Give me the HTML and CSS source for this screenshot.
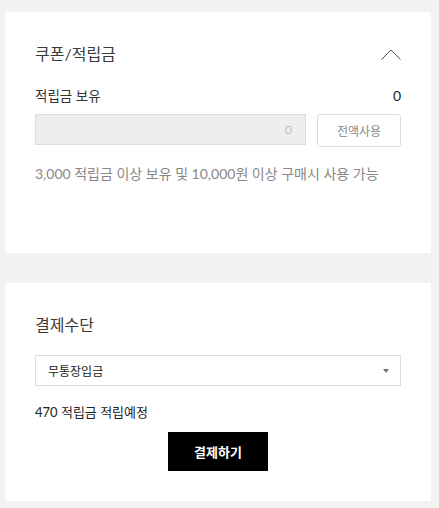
FILE: index.html
```html
<!DOCTYPE html>
<html lang="ko">
<head>
<meta charset="utf-8">
<title>주문서</title>
<link rel="stylesheet" href="styles.css">
</head>
<body>
<div class="page">
  <section class="card card-coupon">
    <div class="card-head">
      <h2 class="card-title">쿠폰/적립금</h2>
      <svg class="chevron" width="20" height="11" viewBox="0 0 20 11" aria-hidden="true">
        <polyline points="0.5,10.5 10,1 19.5,10.5" fill="none" stroke="#4a5260" stroke-width="1"/>
      </svg>
    </div>
    <div class="point-row">
      <span>적립금 보유</span>
      <span class="point-val">0</span>
    </div>
    <div class="use-row">
      <input class="point-input" type="text" value="0" readonly>
      <button class="btn-all" type="button">전액사용</button>
    </div>
    <p class="note">3,000 적립금 이상 보유 및 10,000원 이상 구매시 사용 가능</p>
  </section>

  <section class="card card-pay">
    <h2 class="card-title">결제수단</h2>
    <div class="select">
      <span>무통장입금</span>
      <span class="caret"></span>
    </div>
    <p class="earn">470 적립금 적립예정</p>
    <div class="pay-wrap">
      <button class="btn-pay" type="button">결제하기</button>
    </div>
  </section>
</div>
</body>
</html>
```

FILE: styles.css
```css
html, body {
  margin: 0;
  padding: 0;
  background: #f2f2f2;
}
body {
  font-family: Lato, "Noto Sans CJK KR", sans-serif;
  color: #333;
}
.page {
  display: flex;
  flex-direction: column;
  gap: 30px;
  padding: 12px 8px 7px 5px;
}
.card {
  background: #fff;
  padding: 30px 30px 0;
  box-sizing: border-box;
}
.card-coupon {
  height: 241px;
}
.card-pay {
  height: 218px;
}
.card-head {
  display: flex;
  align-items: center;
  justify-content: space-between;
  height: 24px;
}
.card-title {
  margin: 0;
  font-size: 16px;
  font-weight: 400;
  line-height: 24px;
  color: #3a3a3a;
}
.chevron {
  display: block;
  margin-top: 1px;
}
.point-row {
  display: flex;
  justify-content: space-between;
  align-items: center;
  margin-top: 20px;
  font-size: 13.5px;
  line-height: 20px;
  color: #333;
}
.point-val {
  font-size: 14px;
  font-weight: 400;
  color: #222;
}
.use-row {
  display: flex;
  align-items: flex-start;
  gap: 11px;
  margin-top: 8px;
}
.point-input {
  width: 271px;
  height: 31px;
  box-sizing: border-box;
  margin: 0;
  border: 1px solid #dcdcdc;
  background: #eeeeee;
  padding: 0 13px;
  text-align: right;
  font-family: Lato, "Noto Sans CJK KR", sans-serif;
  font-size: 12px;
  font-weight: 300;
  color: #999;
  outline: none;
}
.btn-all {
  width: 84px;
  height: 33px;
  margin: 0;
  padding: 0;
  box-sizing: border-box;
  border: 1px solid #dcdcdc;
  border-radius: 3px;
  background: #fff;
  font-family: Lato, "Noto Sans CJK KR", sans-serif;
  font-size: 12px;
  color: #888;
}
.note {
  margin: 17px 0 0;
  font-size: 14px;
  line-height: 20px;
  color: #878787;
}
.select {
  display: flex;
  align-items: center;
  justify-content: space-between;
  height: 31px;
  box-sizing: border-box;
  margin-top: 18px;
  padding: 0 11px 0 12px;
  border: 1px solid #dcdcdc;
  font-size: 12px;
  color: #222;
}
.caret {
  width: 0;
  height: 0;
  border-left: 3.5px solid transparent;
  border-right: 3.5px solid transparent;
  border-top: 4px solid #777;
}
.earn {
  margin: 16px 0 0;
  font-size: 13px;
  line-height: 20px;
  color: #222;
}
.pay-wrap {
  display: flex;
  justify-content: center;
  margin-top: 10px;
}
.btn-pay {
  width: 100px;
  height: 39px;
  margin: 0;
  padding: 0;
  border: 0;
  background: #000;
  color: #fff;
  font-family: Lato, "Noto Sans CJK KR", sans-serif;
  font-size: 13px;
  font-weight: 700;
}
```
